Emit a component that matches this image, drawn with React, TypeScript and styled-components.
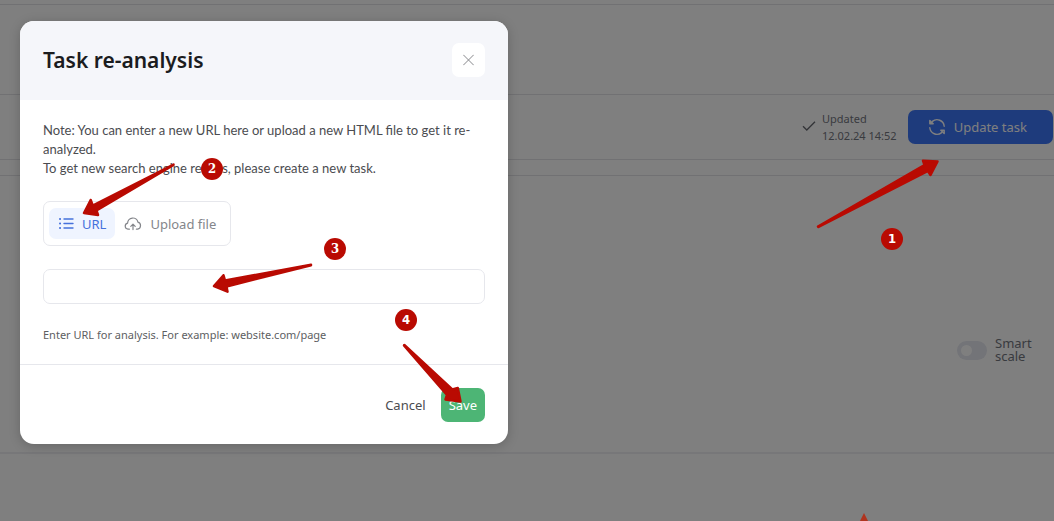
import React, { useState } from "react";
import styled, { createGlobalStyle } from "styled-components";

const GlobalStyle = createGlobalStyle`
  *, *::before, *::after { box-sizing: border-box; }
  body {
    margin: 0;
    background: #fff;
    color: #4b4c50;
    font-family: "Noto Sans", "Liberation Sans", sans-serif;
    font-size: 13px;
  }
  button, input { font: inherit; }
`;

const Page = styled.div`
  position: relative;
  min-height: 100vh;
  overflow: hidden;
`;

const Band = styled.section<{ $height: number; $soft?: boolean }>`
  min-height: ${(p) => p.$height}px;
  border-bottom: ${(p) => (p.$soft ? "2px solid #efeff2" : "1px solid #e2e3e7")};
`;

const Toolbar = styled(Band)`
  display: flex;
  align-items: center;
  justify-content: flex-end;
  gap: 11px;
  padding-right: 1px;
`;

const Status = styled.div`
  display: flex;
  align-items: center;
  gap: 6px;
  color: #73767f;
  font-size: 11px;
  line-height: 17px;
`;

const UpdateButton = styled.button`
  display: flex;
  align-items: center;
  gap: 8px;
  height: 34px;
  padding: 0 26px 0 20px;
  border: 0;
  border-radius: 7px;
  background: #3d76f8;
  color: #fff;
`;

const ChartPanel = styled(Band)`
  display: flex;
  justify-content: flex-end;
  align-items: flex-start;
  padding: 161px 21px 0 0;
`;

const ToggleLabel = styled.label`
  display: flex;
  align-items: center;
  gap: 8px;
  width: 76px;
  color: #73767f;
  line-height: 13px;
`;

const Toggle = styled.input`
  appearance: none;
  flex: none;
  display: flex;
  align-items: center;
  width: 30px;
  height: 19px;
  margin: 0;
  padding: 0 4px;
  border-radius: 10px;
  background: #e6e8f0;
  &::before {
    content: "";
    width: 11px;
    height: 11px;
    border-radius: 50%;
    background: #fff;
  }
  &:checked { justify-content: flex-end; background: #3d76f8; }
`;

const Scrim = styled.div`
  position: absolute;
  inset: 0;
  padding: 21px 20px;
  background: rgba(0, 0, 0, 0.5);
`;

const Dialog = styled.form`
  display: flex;
  flex-direction: column;
  max-width: 488px;
  border-radius: 14px;
  background: #fff;
  box-shadow: 0 2px 12px rgba(0, 0, 0, 0.2);
  overflow: hidden;
`;

const DialogHeader = styled.header`
  display: flex;
  align-items: center;
  justify-content: space-between;
  padding: 22px 23px 23px;
  background: #f5f6fa;
`;

const Title = styled.h1`
  margin: 0;
  color: #1b1c1e;
  font-size: 21px;
  line-height: 34px;
  font-weight: 600;
`;

const CloseButton = styled.button`
  display: grid;
  place-items: center;
  width: 33px;
  height: 34px;
  padding: 0;
  border: 0;
  border-radius: 7px;
  background: #fff;
`;

const DialogBody = styled.div`
  display: flex;
  flex-direction: column;
  align-items: flex-start;
  gap: 23px;
  padding: 21px 23px;
`;

const Note = styled.p`
  margin: 0;
  font-family: Lato, "Liberation Sans", sans-serif;
  line-height: 19px;
`;

const Tabs = styled.div`
  display: flex;
  padding: 6px 5px;
  border: 1px solid #e6e7ec;
  border-radius: 7px;
`;

const Tab = styled.button<{ $active: boolean }>`
  display: flex;
  align-items: center;
  gap: 8px;
  height: 31px;
  padding: 0 9px;
  border: 0;
  border-radius: 7px;
  background: ${(p) => (p.$active ? "#eff4ff" : "transparent")};
  color: ${(p) => (p.$active ? "#4671dc" : "#84868b")};
`;

const UrlInput = styled.input`
  width: 100%;
  height: 35px;
  padding: 0 12px;
  border: 1px solid #e6e7ec;
  border-radius: 7px;
  background: #fff;
  color: inherit;
  outline: 0;
`;

const Hint = styled.label`
  color: #5d5e62;
  font-size: 11px;
  line-height: 16px;
`;

const DialogFooter = styled.footer`
  display: flex;
  justify-content: flex-end;
  gap: 5px;
  padding: 23px 23px 22px;
  border-top: 1px solid #e6e7ec;
`;

const FooterButton = styled.button<{ $primary?: boolean }>`
  height: 34px;
  padding: 0 ${(p) => (p.$primary ? 8 : 10)}px;
  border: 0;
  border-radius: 7px;
  background: ${(p) => (p.$primary ? "#4db575" : "transparent")};
  color: ${(p) => (p.$primary ? "#fff" : "#4b4c50")};
`;

const Annotations = styled.div`
  position: absolute;
  inset: 0;
  overflow: hidden;
  pointer-events: none;
`;

const Arrows = styled.svg`
  display: block;
  width: 100%;
  height: 100%;
`;

const Badge = styled.span<{ $x: number; $y: number; $serif?: boolean }>`
  position: absolute;
  left: ${(p) => p.$x - 11}px;
  top: ${(p) => p.$y - 11}px;
  width: 22px;
  height: 22px;
  border-radius: 50%;
  background: #b90a02;
  color: #fff;
  font: 700 13px/22px
    ${(p) =>
      p.$serif
        ? '"DejaVu Serif Condensed", "DejaVu Serif", serif'
        : '"DejaVu Sans Condensed", "DejaVu Sans", sans-serif'};
  text-align: center;
`;

const arrows = [
  "818,226.5 924.5,165 923,160.7 937.5,161.5 930.5,175 928,171 818.5,227",
  "173.5,164.5 92.7,205.5 90.7,200 84,213 98,215 96.5,210.5 173.5,165",
  "311,264.7 225,280.5 223.5,275.3 214,286 227.5,291.7 226.5,286.5 311,265.2",
  "404.3,345 452.3,389.5 457.8,388 460.5,401.5 445.5,399.5 447,395 404,345.5",
];

const badges = [
  { n: 1, x: 892, y: 239 },
  { n: 2, x: 212, y: 169, serif: true },
  { n: 3, x: 335, y: 249, serif: true },
  { n: 4, x: 406, y: 320 },
];

const CheckIcon = () => (
  <svg width="14" height="12" viewBox="0 0 14 12" fill="none" stroke="#66686f" strokeWidth="1.3" aria-hidden="true">
    <path d="M1 5.2 4.8 9 13 .8" />
  </svg>
);

const RefreshIcon = () => (
  <svg width="18" height="18" viewBox="0 0 18 18" fill="none" stroke="currentColor" strokeWidth="1.4" strokeLinecap="round" strokeLinejoin="round" aria-hidden="true">
    <path d="M1.8 2.4V5.8H5.2Z" />
    <path d="M4.4 3.4A7.2 7.2 0 0 1 16.2 8.2" />
    <path d="M16.2 15.6V12.2H12.8Z" />
    <path d="M13.6 14.6A7.2 7.2 0 0 1 1.8 9.8" />
  </svg>
);

const ListIcon = () => (
  <svg width="16" height="14" viewBox="0 0 16 14" fill="none" stroke="currentColor" strokeWidth="1.4" strokeLinecap="round" aria-hidden="true">
    <path d="M6 2H15M6 6.5H15M6 11H15" />
    <path d="M2 2H2.1M2 6.5H2.1M2 11H2.1" strokeWidth="2" />
  </svg>
);

const CloudIcon = () => (
  <svg width="18" height="14" viewBox="0 0 18 14" fill="none" stroke="currentColor" strokeWidth="1.2" strokeLinecap="round" strokeLinejoin="round" aria-hidden="true">
    <path d="M5.4 12.2H4A3.1 3.1 0 0 1 3.6 6.1 5.2 5.2 0 0 1 13.9 5.2 3.6 3.6 0 0 1 13.6 12.2H12.4" />
    <path d="M9 12.6V7.4M6.8 9.3 9 7.1 11.2 9.3" />
  </svg>
);

export default function App() {
  const [tab, setTab] = useState<"url" | "file">("url");
  const [url, setUrl] = useState("");

  return (
    <>
      <GlobalStyle />
      <Page>
        <Band $height={5} />
        <Band $height={90} />
        <Toolbar $height={65}>
          <Status>
            <CheckIcon />
            <div>
              Updated
              <br />
              12.02.24 14:52
            </div>
          </Status>
          <UpdateButton type="button">
            <RefreshIcon />
            Update task
          </UpdateButton>
        </Toolbar>
        <Band $height={16} />
        <ChartPanel $height={278} $soft>
          <ToggleLabel>
            <Toggle type="checkbox" />
            Smart scale
          </ToggleLabel>
        </ChartPanel>

        <Scrim>
          <Dialog role="dialog" aria-labelledby="dialog-title" onSubmit={(e) => e.preventDefault()}>
            <DialogHeader>
              <Title id="dialog-title">Task re-analysis</Title>
              <CloseButton type="button" aria-label="Close">
                <svg width="11" height="12" viewBox="0 0 11 12" stroke="#86878b" strokeWidth="1" aria-hidden="true">
                  <path d="M.3.8 10.7 11.2M10.7.8.3 11.2" />
                </svg>
              </CloseButton>
            </DialogHeader>
            <DialogBody>
              <Note>
                Note: You can enter a new URL here or upload a new HTML file to get it re-analyzed.
                <br />
                To get new search engine results, please create a new task.
              </Note>
              <Tabs role="tablist">
                <Tab type="button" role="tab" aria-selected={tab === "url"} $active={tab === "url"} onClick={() => setTab("url")}>
                  <ListIcon />
                  URL
                </Tab>
                <Tab type="button" role="tab" aria-selected={tab === "file"} $active={tab === "file"} onClick={() => setTab("file")}>
                  <CloudIcon />
                  Upload file
                </Tab>
              </Tabs>
              <UrlInput id="url" type="text" value={url} onChange={(e) => setUrl(e.target.value)} />
              <Hint htmlFor="url">Enter URL for analysis. For example: website.com/page</Hint>
            </DialogBody>
            <DialogFooter>
              <FooterButton type="button">Cancel</FooterButton>
              <FooterButton type="submit" $primary>
                Save
              </FooterButton>
            </DialogFooter>
          </Dialog>
        </Scrim>

        <Annotations>
          <Arrows aria-hidden="true">
            <g fill="#b90a02" stroke="#b90a02" strokeWidth="2.5" strokeLinejoin="round">
              {arrows.map((points) => (
                <polygon key={points} points={points} />
              ))}
            </g>
            <polygon points="864,513 869,523 859,523" fill="#b0341f" />
          </Arrows>
          {badges.map((b) => (
            <Badge key={b.n} $x={b.x} $y={b.y} $serif={b.serif}>
              {b.n}
            </Badge>
          ))}
        </Annotations>
      </Page>
    </>
  );
}
